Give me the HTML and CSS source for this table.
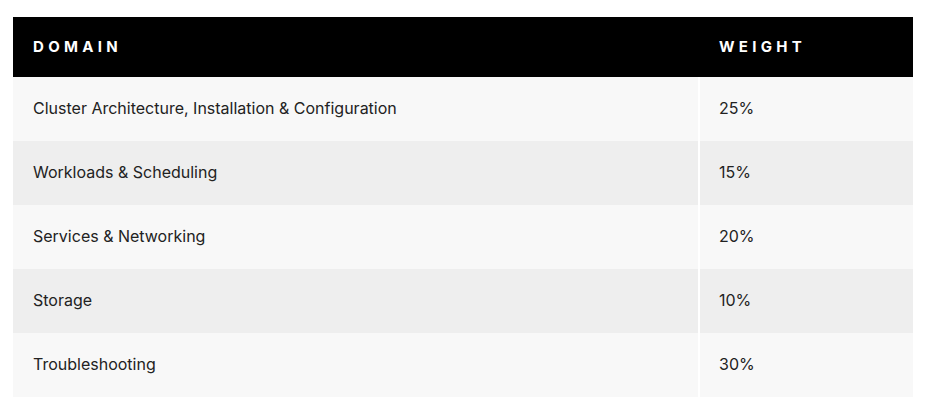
FILE: index.html
```html
<!DOCTYPE html>
<html>
<head>
<meta charset="utf-8">
<link rel="stylesheet" href="styles.css">
</head>
<body>
<table class="domains">
  <thead>
    <tr><th class="col-domain">Domain</th><th class="col-weight">Weight</th></tr>
  </thead>
  <tbody>
    <tr><td class="col-domain">Cluster Architecture, Installation &amp; Configuration</td><td class="col-weight">25%</td></tr>
    <tr><td class="col-domain">Workloads &amp; Scheduling</td><td class="col-weight">15%</td></tr>
    <tr><td class="col-domain">Services &amp; Networking</td><td class="col-weight">20%</td></tr>
    <tr><td class="col-domain">Storage</td><td class="col-weight">10%</td></tr>
    <tr><td class="col-domain">Troubleshooting</td><td class="col-weight">30%</td></tr>
  </tbody>
</table>
</body>
</html>
```
FILE: styles.css
```css
html, body {
  margin: 0;
  padding: 0;
  background: #ffffff;
}
body {
  padding: 17px 15px 0 13px;
  font-family: Inter, "Noto Sans", sans-serif;
  color: #222222;
}
.domains {
  width: 900px;
  border-collapse: collapse;
}
.domains th {
  background: #000000;
  color: #ffffff;
  height: 60px;
  box-sizing: border-box;
  padding: 0 20px 2px;
  text-align: left;
  text-transform: uppercase;
  font-size: 15px;
  font-weight: 700;
  letter-spacing: 4.3px;
}
.domains td {
  height: 64px;
  padding: 0 20px 2px 19px;
  font-size: 16px;
  box-sizing: border-box;
}
.domains tbody tr:nth-child(odd) td {
  background: #f8f8f8;
}
.domains tbody tr:nth-child(even) td {
  background: #eeeeee;
}
.domains .col-domain {
  width: 686px;
  box-sizing: border-box;
}
.domains td.col-domain {
  padding-left: 20px;
  border-right: 2px solid #ffffff;
}
```
